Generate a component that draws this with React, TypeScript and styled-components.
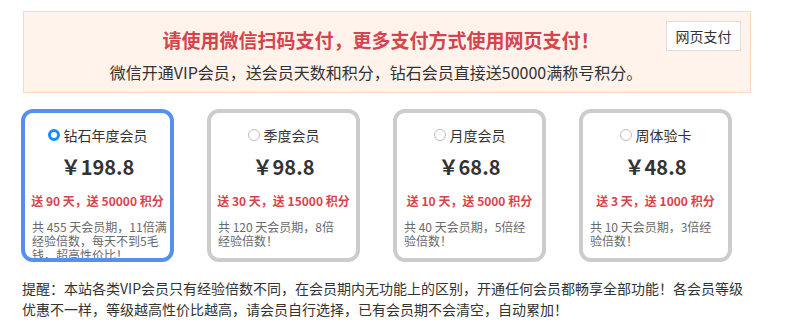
import styled, { createGlobalStyle } from "styled-components";

const GlobalStyle = createGlobalStyle`
  body {
    margin: 0;
    background: #fff;
    font-family: "Noto Sans CJK SC", "Noto Sans", sans-serif;
    color: #333;
  }
`;

const Page = styled.div`
  width: 729px;
  padding: 11px 0 0 22px;
`;

const Banner = styled.div`
  position: relative;
  box-sizing: border-box;
  width: 728px;
  height: 82px;
  margin-left: 1px;
  padding: 14px 22px 0 0;
  background: #fff3eb;
  border: 1px solid #fbd9c2;
  text-align: center;
`;

const Title = styled.div`
  padding-left: 10px;
  font-size: 19px;
  line-height: 28px;
  font-weight: bold;
  color: #d6434e;
`;

const Subtitle = styled.div`
  margin-top: 6px;
  font-size: 16px;
  line-height: 24px;
  color: #333;
`;

const WebPayButton = styled.button`
  position: absolute;
  top: 9px;
  right: 9px;
  width: 75px;
  height: 30px;
  padding: 0;
  background: #fff;
  border: 1px solid #ddd;
  font-family: inherit;
  font-size: 14px;
  color: #333;
  cursor: pointer;
`;

const Plans = styled.div`
  display: flex;
  gap: 33px;
  margin: 16px 0 0 -1px;
`;

const Card = styled.div<{ $active?: boolean }>`
  box-sizing: border-box;
  width: 153px;
  height: 153px;
  padding: 12px 7px 0;
  border: 4px solid ${(p) => (p.$active ? "#5590ee" : "#cccccc")};
  border-radius: 12px;
  background: #fff;
  overflow: hidden;
  display: flex;
  flex-direction: column;
  align-items: center;
  cursor: pointer;
`;

const Label = styled.div`
  display: flex;
  align-items: center;
  gap: 4px;
  font-size: 14px;
  line-height: 20px;
  color: #333;
`;

const Radio = styled.span<{ $checked?: boolean }>`
  box-sizing: border-box;
  width: 12px;
  height: 12px;
  border-radius: 50%;
  background: #fff;
  border: ${(p) => (p.$checked ? "3.5px solid #1a8cff" : "1px solid #bbb")};
`;

const Price = styled.div`
  margin-top: 9px;
  font-size: 20px;
  line-height: 26px;
  font-weight: bold;
  color: #333;
`;

const Bonus = styled.div`
  margin-top: 13px;
  font-size: 12px;
  line-height: 16px;
  font-weight: bold;
  color: #d9434e;
  white-space: nowrap;
`;

const Desc = styled.div`
  align-self: stretch;
  margin-top: 11px;
  font-size: 12px;
  line-height: 14px;
  color: #6a6a6a;

  span {
    display: block;
    white-space: nowrap;
  }
`;

const Note = styled.p`
  margin: 16px 0 0;
  font-size: 14px;
  line-height: 21px;
  color: #333;
`;

const plans = [
  {
    name: "钻石年度会员",
    price: "￥198.8",
    bonus: "送 90 天，送 50000 积分",
    desc: ["共 455 天会员期，11倍满", "经验倍数，每天不到5毛", "钱，超高性价比！"],
  },
  {
    name: "季度会员",
    price: "￥98.8",
    bonus: "送 30 天，送 15000 积分",
    desc: ["共 120 天会员期，8倍", "经验倍数！"],
  },
  {
    name: "月度会员",
    price: "￥68.8",
    bonus: "送 10 天，送 5000 积分",
    desc: ["共 40 天会员期，5倍经", "验倍数！"],
  },
  {
    name: "周体验卡",
    price: "￥48.8",
    bonus: "送 3 天，送 1000 积分",
    desc: ["共 10 天会员期，3倍经", "验倍数！"],
  },
];

export default function App() {
  const selected = 0;

  return (
    <Page>
      <GlobalStyle />
      <Banner>
        <Title>请使用微信扫码支付，更多支付方式使用网页支付！</Title>
        <Subtitle>微信开通VIP会员，送会员天数和积分，钻石会员直接送50000满称号积分。</Subtitle>
        <WebPayButton>网页支付</WebPayButton>
      </Banner>

      <Plans>
        {plans.map((plan, i) => (
          <Card key={plan.name} $active={i === selected}>
            <Label>
              <Radio $checked={i === selected} />
              {plan.name}
            </Label>
            <Price>{plan.price}</Price>
            <Bonus>{plan.bonus}</Bonus>
            <Desc>
              {plan.desc.map((line) => (
                <span key={line}>{line}</span>
              ))}
            </Desc>
          </Card>
        ))}
      </Plans>

      <Note>
        提醒：本站各类VIP会员只有经验倍数不同，在会员期内无功能上的区别，开通任何会员都畅享全部功能！各会员等级优惠不一样，等级越高性价比越高，请会员自行选择，已有会员期不会清空，自动累加！
      </Note>
    </Page>
  );
}
